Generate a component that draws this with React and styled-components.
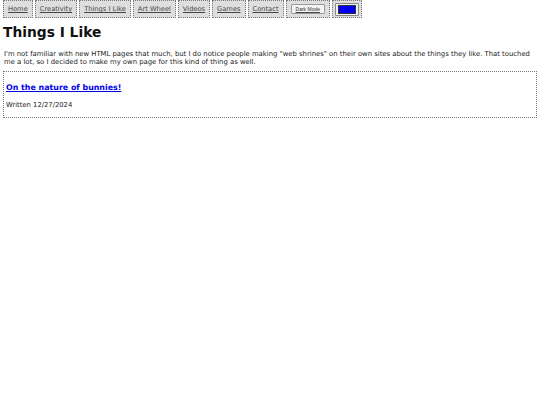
import styled, { createGlobalStyle } from "styled-components";

const GlobalStyle = createGlobalStyle`
    html, body {
        margin: 0;
        background: white;
    }
    body {
        padding: 0 3px;
        font-family: "DejaVu Sans", Verdana, sans-serif;
        color: #222;
    }
`

const Nav = styled.nav`
    display: flex;
    gap: 2px;
    align-items: stretch;
`

const NavItem = styled.a`
    display: flex;
    align-items: center;
    height: 18px;
    box-sizing: border-box;
    padding: 0 ${props => props.$pad || 4}px;
    border: 1px dotted #777;
    background: #dedede;
    color: #444;
    font-size: 6.7px;
    text-decoration: underline;
`

const ToggleButton = styled.button`
    font-family: "Liberation Sans", Arial, sans-serif;
    font-size: 5px;
    color: #333;
    background: #f4f4f4;
    border: 1px solid #999;
    border-radius: 1px;
    padding: 1px 4px;
    margin: 0;
`

const ColorSwatch = styled.span`
    display: inline-flex;
    width: 24px;
    height: 13px;
    box-sizing: border-box;
    padding: 1px 2px;
    border: 1px solid #888;
    background: #efefef;
    border-radius: 1px;
    & > span {
        flex: 1;
        background: #0000ee;
        border: 1px solid #333;
    }
`

const Title = styled.h1`
    font-size: 13.8px;
    margin: 6px 0 10px;
    color: #111;
`

const Intro = styled.p`
    font-size: 6.85px;
    line-height: 8px;
    margin: 0 0 5px;
    padding-left: 1px;
`

const Post = styled.article`
    border: 1px dotted #777;
    padding: 8px 2px 8px;
`

const PostLink = styled.a`
    display: block;
    font-size: 7.9px;
    font-weight: bold;
    color: #0000ee;
    text-decoration: underline;
    margin: 3px 0 9px;
`

const PostDate = styled.p`
    font-size: 6.8px;
    margin: 0;
`

const links = ["Home", "Creativity", "Things I Like", "Art Wheel", "Videos", "Games", "Contact"];

const App = () => (
    <>
        <GlobalStyle/>
        <Nav>
            {links.map(link => <NavItem key={link} href="#">{link}</NavItem>)}
            <NavItem as="div"><ToggleButton>Dark Mode</ToggleButton></NavItem>
            <NavItem as="div" $pad={2}><ColorSwatch><span/></ColorSwatch></NavItem>
        </Nav>
        <Title>Things I Like</Title>
        <Intro>
            I'm not familiar with new HTML pages that much, but I do notice people making "web shrines" on their own sites about the things they like. That touched me a lot, so I decided to make my own page for this kind of thing as well.
        </Intro>
        <Post>
            <PostLink href="#">On the nature of bunnies!</PostLink>
            <PostDate>Written 12/27/2024</PostDate>
        </Post>
    </>
)

export default App;
